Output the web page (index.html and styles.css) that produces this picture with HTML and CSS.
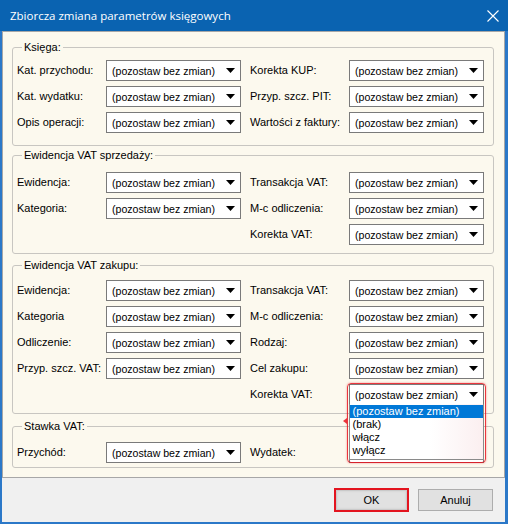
FILE: index.html
```html
<!DOCTYPE html>
<html lang="pl">
<head>
<meta charset="utf-8">
<title>Zbiorcza zmiana parametrów księgowych</title>
<link rel="stylesheet" href="styles.css">
</head>
<body>
<div class="window">
  <div class="titlebar">
    <span class="title">Zbiorcza zmiana parametrów księgowych</span>
    <svg class="close" width="12" height="12" viewBox="0 0 12 12"><path d="M0.5 0.5 L11.5 11.5 M11.5 0.5 L0.5 11.5" stroke="#fff" stroke-width="1.1" fill="none"/></svg>
  </div>
  <div class="frame">
    <div class="panel">
      <fieldset class="group g1">
        <legend>Księga:</legend>
        <div class="grid">
          <span class="lbl">Kat. przychodu:</span><div class="combo"><span>(pozostaw bez zmian)</span><i class="arrow"></i></div>
          <span class="lbl">Korekta KUP:</span><div class="combo"><span>(pozostaw bez zmian)</span><i class="arrow"></i></div>
          <span class="lbl">Kat. wydatku:</span><div class="combo"><span>(pozostaw bez zmian)</span><i class="arrow"></i></div>
          <span class="lbl">Przyp. szcz. PIT:</span><div class="combo"><span>(pozostaw bez zmian)</span><i class="arrow"></i></div>
          <span class="lbl">Opis operacji:</span><div class="combo"><span>(pozostaw bez zmian)</span><i class="arrow"></i></div>
          <span class="lbl">Wartości z faktury:</span><div class="combo"><span>(pozostaw bez zmian)</span><i class="arrow"></i></div>
        </div>
      </fieldset>
      <fieldset class="group g2">
        <legend>Ewidencja VAT sprzedaży:</legend>
        <div class="grid">
          <span class="lbl">Ewidencja:</span><div class="combo"><span>(pozostaw bez zmian)</span><i class="arrow"></i></div>
          <span class="lbl">Transakcja VAT:</span><div class="combo"><span>(pozostaw bez zmian)</span><i class="arrow"></i></div>
          <span class="lbl">Kategoria:</span><div class="combo"><span>(pozostaw bez zmian)</span><i class="arrow"></i></div>
          <span class="lbl">M-c odliczenia:</span><div class="combo"><span>(pozostaw bez zmian)</span><i class="arrow"></i></div>
          <span class="lbl c3">Korekta VAT:</span><div class="combo"><span>(pozostaw bez zmian)</span><i class="arrow"></i></div>
        </div>
      </fieldset>
      <fieldset class="group g3">
        <legend>Ewidencja VAT zakupu:</legend>
        <div class="grid">
          <span class="lbl">Ewidencja:</span><div class="combo"><span>(pozostaw bez zmian)</span><i class="arrow"></i></div>
          <span class="lbl">Transakcja VAT:</span><div class="combo"><span>(pozostaw bez zmian)</span><i class="arrow"></i></div>
          <span class="lbl">Kategoria</span><div class="combo"><span>(pozostaw bez zmian)</span><i class="arrow"></i></div>
          <span class="lbl">M-c odliczenia:</span><div class="combo"><span>(pozostaw bez zmian)</span><i class="arrow"></i></div>
          <span class="lbl">Odliczenie:</span><div class="combo"><span>(pozostaw bez zmian)</span><i class="arrow"></i></div>
          <span class="lbl">Rodzaj:</span><div class="combo"><span>(pozostaw bez zmian)</span><i class="arrow"></i></div>
          <span class="lbl">Przyp. szcz. VAT:</span><div class="combo"><span>(pozostaw bez zmian)</span><i class="arrow"></i></div>
          <span class="lbl">Cel zakupu:</span><div class="combo"><span>(pozostaw bez zmian)</span><i class="arrow"></i></div>
          <span class="lbl c3">Korekta VAT:</span><div class="combo"><span>(pozostaw bez zmian)</span><i class="arrow"></i></div>
        </div>
      </fieldset>
      <fieldset class="group g4">
        <legend>Stawka VAT:</legend>
        <div class="grid">
          <span class="lbl">Przychód:</span><div class="combo"><span>(pozostaw bez zmian)</span><i class="arrow"></i></div>
          <span class="lbl">Wydatek:</span><div class="combo covered"><span>(pozostaw bez zmian)</span><i class="arrow"></i></div>
        </div>
      </fieldset>
    </div>
    <div class="footer">
      <button class="btn ok">OK</button>
      <button class="btn">Anuluj</button>
    </div>
  </div>
  <div class="dropdown">
    <ul class="list">
      <li class="sel">(pozostaw bez zmian)</li>
      <li>(brak)</li>
      <li>włącz</li>
      <li>wyłącz</li>
    </ul>
  </div>
</div>
</body>
</html>
```

FILE: styles.css
```css
* { box-sizing: border-box; }
html, body { margin: 0; padding: 0; }
body {
  width: 508px;
  height: 524px;
  overflow: hidden;
  font-family: "Liberation Sans", Arial, sans-serif;
  font-size: 11px;
  color: #000;
  background: #fff;
}
.window {
  position: relative;
  width: 508px;
  height: 524px;
  display: flex;
  flex-direction: column;
}
.titlebar {
  height: 31px;
  flex: none;
  background: #0a63b1;
  color: #fff;
  display: flex;
  align-items: center;
  padding: 0 9px 0 10px;
}
.title {
  font-family: "Open Sans", "Noto Sans", sans-serif;
  font-size: 11.5px;
  line-height: 16px;
  padding-top: 1px;
}
.close { margin-left: auto; display: block; }
.frame {
  flex: 1;
  display: flex;
  flex-direction: column;
  border-style: solid;
  border-color: #2b78c8;
  border-width: 0 3px 2px 2px;
}
.panel {
  height: 447px;
  flex: none;
  background: #fcf9ee;
  border: 1px solid #a7a7a7;
  padding: 9px 10px 0 9px;
}
.group {
  margin: 0;
  border: 1px solid #c8c6c1;
  border-radius: 3px;
  padding: 6px 9px 12px 4px;
  min-width: 0;
}
.group legend {
  margin-left: 5px;
  padding: 0 2px;
  line-height: 13px;
  height: 13px;
}
.g2 { margin-top: 3px; padding-top: 10px; padding-bottom: 8px; }
.g3 { margin-top: 5px; padding-top: 8px; padding-bottom: 8px; }
.g4 { margin-top: 6px; padding-top: 9px; padding-bottom: 4px; }
.grid {
  display: grid;
  grid-template-columns: 89px 144px 99px 135px;
  grid-auto-rows: 21px;
  row-gap: 5px;
  align-items: center;
}
.lbl { white-space: nowrap; line-height: 13px; }
.c3 { grid-column: 3; }
.combo {
  width: 135px;
  height: 21px;
  background: #fff;
  border: 1px solid #7a7a7a;
  display: flex;
  align-items: center;
  padding-left: 5px;
  white-space: nowrap;
}
.combo span { font-size: 10.6px; }
.combo.covered span { visibility: hidden; }
.arrow {
  display: block;
  width: 9px;
  height: 5px;
  margin-left: auto;
  margin-right: 5px;
  background: #000;
  clip-path: polygon(0 0, 100% 0, 50% 100%);
}
.footer {
  flex: 1;
  background: #f0f0f0;
  display: flex;
  justify-content: flex-end;
  align-items: center;
  gap: 9px;
  padding-right: 12px;
}
.btn {
  width: 75px;
  height: 22px;
  background: #e1e1e1;
  border: 1px solid #adadad;
  font-family: "Liberation Sans", Arial, sans-serif;
  font-size: 11px;
  color: #000;
  padding: 0;
}
.btn.ok {
  height: 24px;
  border: 2px solid #e3141f;
  box-shadow: inset 0 0 0 1px #c9c9c9, inset 0 0 3px 1px #d0d0d0;
}
.dropdown {
  position: absolute;
  left: 347px;
  top: 383px;
  width: 139px;
  height: 80px;
  border: 1.5px solid rgba(230, 20, 30, 0.85);
  border-radius: 4px;
  box-shadow: 0 0 2px rgba(230, 20, 30, 0.5);
}
.dropdown::before {
  content: "";
  position: absolute;
  left: -5px;
  top: 34px;
  width: 0;
  height: 0;
  border-top: 3px solid transparent;
  border-bottom: 3px solid transparent;
  border-right: 4px solid rgba(230, 20, 30, 0.85);
}
.list {
  position: absolute;
  left: 0.5px;
  top: 19.5px;
  width: 135px;
  height: 56px;
  margin: 0;
  padding: 1px 0 0 0;
  list-style: none;
  background: linear-gradient(90deg, #fff 0%, #fff 60%, #fbeff0 100%);
  border: 1px solid #8a8a8a;
  border-top: none;
}
.list li {
  height: 13px;
  line-height: 13px;
  padding-left: 3px;
  font-size: 11px;
  white-space: nowrap;
}
.list li.sel { background: #0078d7; color: #fff; }
```
